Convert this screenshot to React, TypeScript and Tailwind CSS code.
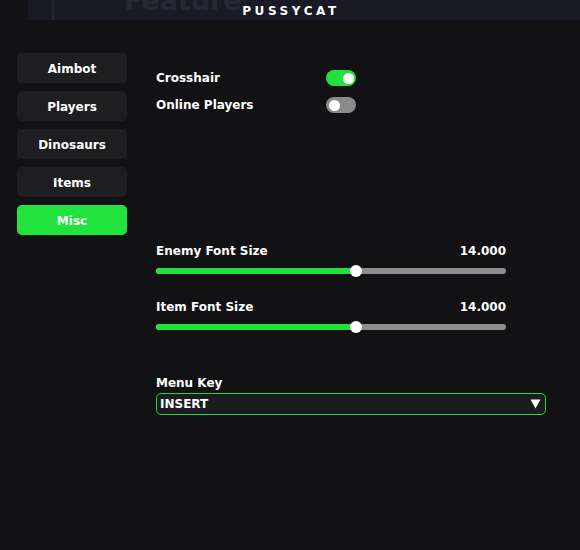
import { useState } from 'react';

const tabs = ['Aimbot', 'Players', 'Dinosaurs', 'Items', 'Misc'];

const Toggle = ({ on, onClick }: { on: boolean; onClick: () => void }) => (
    <button
        onClick={onClick}
        className={`relative h-[16px] w-[30px] rounded-full ${on ? 'bg-[#22e03e]' : 'bg-[#8a8a8a]'}`}
    >
        <span
            className={`absolute top-[2.5px] h-[11px] w-[11px] rounded-full bg-white ${on ? 'left-[16.5px]' : 'left-[2.5px]'}`}
        />
    </button>
);

const Slider = ({ label, value, pct }: { label: string; value: string; pct: number }) => (
    <div className="w-[350px]">
        <div className="flex h-[16px] items-center justify-between text-[12px] font-bold text-white">
            <span>{label}</span>
            <span>{value}</span>
        </div>
        <div className="relative mt-[6px] h-[12px]">
            <div className="absolute top-[3px] h-[6px] w-full rounded-full bg-[#8c8c8c]" />
            <div
                className="absolute top-[3px] h-[6px] rounded-full bg-[#22e03e]"
                style={{ width: `${pct}%` }}
            />
            <div
                className="absolute top-0 h-[12px] w-[12px] -translate-x-1/2 rounded-full bg-white"
                style={{ left: `${pct}%` }}
            />
        </div>
    </div>
);

const App = () => {
    const [active, setActive] = useState('Misc');
    const [crosshair, setCrosshair] = useState(true);
    const [online, setOnline] = useState(false);

    return (
        <div
            className="flex h-[550px] w-[580px] flex-col bg-[#121214] text-white"
            style={{ fontFamily: '"DejaVu Sans", Verdana, sans-serif' }}
        >
            {/* title bar, with the game showing faintly behind it */}
            <div className="relative h-[20px] shrink-0 overflow-hidden bg-[#191a23]">
                <div className="absolute left-0 top-0 h-full w-[28px] bg-[#121217]" />
                <div className="absolute left-[52px] top-0 h-full w-[2px] bg-[#1c2734]" />
                <div className="absolute left-[124px] top-[-16px] text-[27px] font-bold leading-[34px] text-[#262935]">
                    Feature
                </div>
                <div className="relative flex h-full items-center justify-center pl-[2px] pt-[2px] text-[12px] font-bold tracking-[3.6px] text-white">
                    PUSSYCAT
                </div>
            </div>

            <div className="flex">
                <div className="flex w-[139px] flex-col gap-[8px] pl-[17px] pt-[33px]">
                    {tabs.map((t) => (
                        <button
                            key={t}
                            onClick={() => setActive(t)}
                            className={`h-[30px] w-[110px] rounded-[5px] pt-[2px] text-[12px] font-bold text-white ${active === t ? 'bg-[#20e33d]' : 'bg-[#1e1e21]'}`}
                        >
                            {t}
                        </button>
                    ))}
                </div>

                <div className="flex flex-col pl-[17px] pt-[49px]">
                    <div className="flex w-[200px] items-center justify-between text-[12px] font-bold">
                        <span>Crosshair</span>
                        <Toggle on={crosshair} onClick={() => setCrosshair(!crosshair)} />
                    </div>
                    <div className="mt-[9px] flex w-[200px] items-center justify-between text-[12px] font-bold">
                        <span>Online Players</span>
                        <Toggle on={online} onClick={() => setOnline(!online)} />
                    </div>

                    <div className="mt-[129px]">
                        <Slider label="Enemy Font Size" value="14.000" pct={57} />
                    </div>
                    <div className="mt-[22px]">
                        <Slider label="Item Font Size" value="14.000" pct={57} />
                    </div>

                    <div className="mt-[42px] h-[16px] text-[12px] font-bold leading-[16px]">Menu Key</div>
                    <div className="mt-[2px] flex h-[22px] w-[390px] items-center justify-between rounded-[5px] border border-[#2ed14a] bg-[#1c1c1f] pl-[3px] pr-[4px] text-[12px] font-bold">
                        <span>INSERT</span>
                        <svg width="11" height="10" viewBox="0 0 11 10">
                            <path d="M0.5 0.5 H10.5 L5.5 9.5 Z" fill="white" />
                        </svg>
                    </div>
                </div>
            </div>
        </div>
    );
};

export default App;
